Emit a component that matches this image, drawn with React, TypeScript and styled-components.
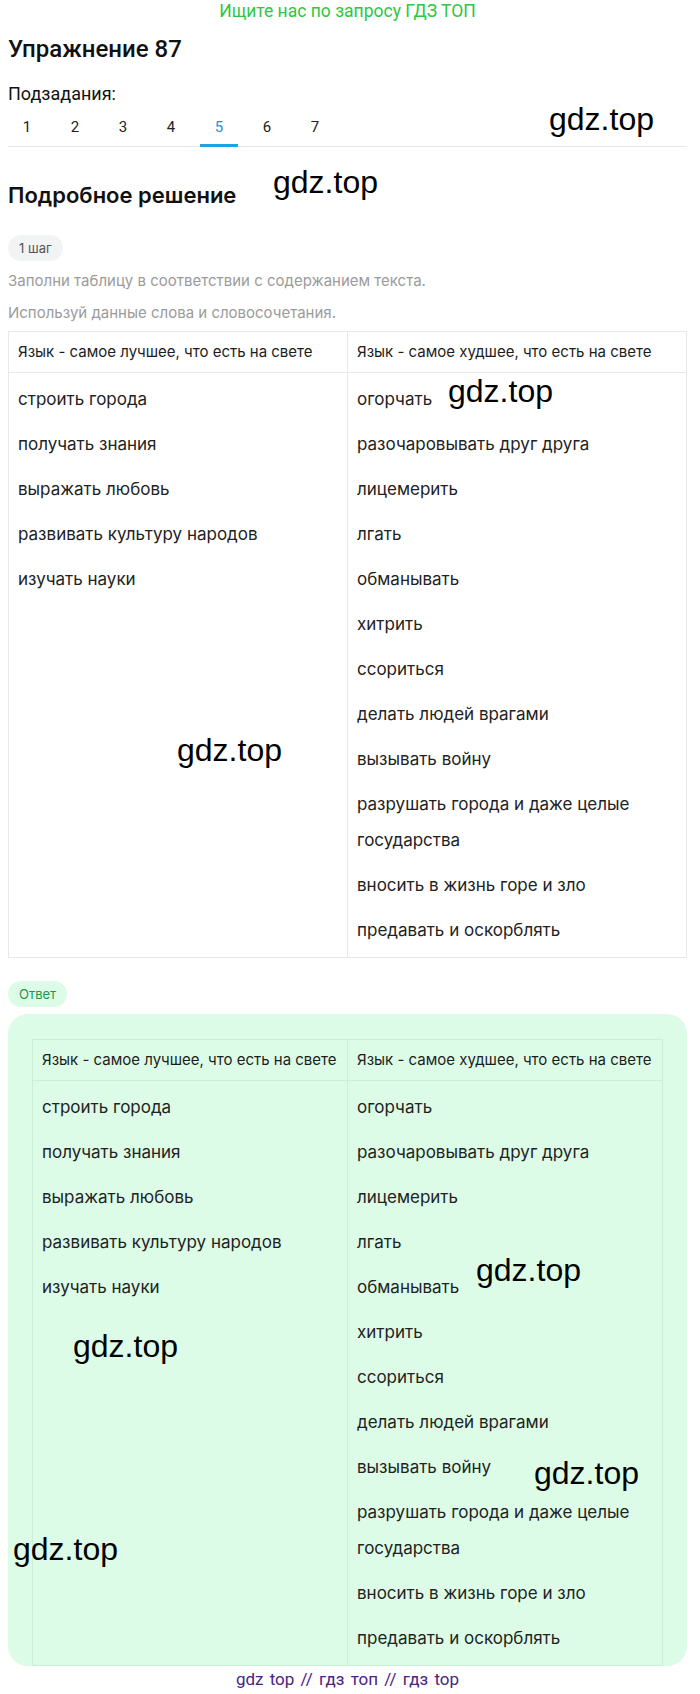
import React from "react";
import styled, { createGlobalStyle } from "styled-components";

const GlobalStyle = createGlobalStyle`
  body {
    margin: 0;
    background: #ffffff;
    font-family: Inter, "Noto Sans", sans-serif;
    color: #1c1c1c;
  }
`;

const Page = styled.div`
  position: relative;
  width: 700px;
  box-sizing: border-box;
  padding: 0 13px 4px 8px;
`;

const Banner = styled.div`
  height: 22px;
  line-height: 22px;
  text-align: center;
  font-family: Roboto, sans-serif;
  font-size: 17.5px;
  color: #2ec642;
`;

const Title = styled.h1`
  margin: 12px 0 0;
  font-family: Roboto, sans-serif;
  font-size: 24px;
  line-height: 30px;
  font-weight: 500;
  color: #111;
`;

const Label = styled.div`
  margin-top: 18px;
  font-family: Roboto, sans-serif;
  font-size: 18px;
  line-height: 24px;
  color: #111;
`;

const Tabs = styled.div`
  display: flex;
  gap: 10px;
  margin-top: 2px;
  border-bottom: 1px solid #e6e8eb;
`;

const Tab = styled.div<{ $active?: boolean }>`
  width: 38px;
  margin-bottom: -1px;
  padding: 9px 0 7px;
  text-align: center;
  font-family: Roboto, sans-serif;
  font-size: 15px;
  line-height: 20px;
  color: ${(p) => (p.$active ? "#2a8fc9" : "#222")};
  border-bottom: 3px solid ${(p) => (p.$active ? "#20a3dc" : "transparent")};
`;

const SectionTitle = styled.h2`
  margin: 34px 0 0;
  font-size: 22px;
  line-height: 28px;
  font-weight: 600;
  color: #111;
`;

const Pill = styled.div<{ $green?: boolean }>`
  display: inline-block;
  height: 26px;
  line-height: 26px;
  padding: 0 11px;
  border-radius: 13px;
  font-size: 13px;
  background: ${(p) => (p.$green ? "#dcfce7" : "#f2f3f5")};
  color: ${(p) => (p.$green ? "#23944c" : "#555")};
`;

const StepRow = styled.div`
  margin-top: 26px;
`;

const Hints = styled.div`
  margin-top: 4px;
  font-size: 15px;
  line-height: 32px;
  color: #9b9b9b;
`;

const Table = styled.table<{ $green?: boolean }>`
  width: 100%;
  margin-top: 2px;
  border-collapse: collapse;
  table-layout: fixed;

  th,
  td {
    border: 1px solid ${(p) => (p.$green ? "#cbeed6" : "#e6e8eb")};
    vertical-align: top;
    text-align: left;
  }
`;

const Th = styled.th`
  padding: 9px;
  font-size: 15px;
  line-height: 22px;
  font-weight: 400;
  color: #1c1c1c;
`;

const Td = styled.td`
  padding: 8px 9px 0;
`;

const Item = styled.p`
  margin: 0 0 9px;
  font-size: 17px;
  line-height: 36px;
  color: #222;
`;

const AnswerRow = styled.div`
  margin-top: 23px;
`;

const AnswerBox = styled.div`
  margin-top: 7px;
  padding: 25px 24px 0;
  border-radius: 20px;
  background: #dcfce7;

  table {
    margin-top: 0;
  }
`;

const Footer = styled.div`
  margin-top: 2px;
  text-align: center;
  font-family: Roboto, sans-serif;
  font-size: 17px;
  line-height: 22px;
  color: #4a2383;
  word-spacing: 2px;
`;

const Mark = styled.span<{ $x: number; $y: number }>`
  position: absolute;
  left: ${(p) => p.$x}px;
  top: ${(p) => p.$y}px;
  font-family: "Liberation Sans", Arial, sans-serif;
  font-size: 32px;
  line-height: 32px;
  color: #000;
  pointer-events: none;
`;

const good = [
  "строить города",
  "получать знания",
  "выражать любовь",
  "развивать культуру народов",
  "изучать науки",
];

const bad = [
  "огорчать",
  "разочаровывать друг друга",
  "лицемерить",
  "лгать",
  "обманывать",
  "хитрить",
  "ссориться",
  "делать людей врагами",
  "вызывать войну",
  "разрушать города и даже целые государства",
  "вносить в жизнь горе и зло",
  "предавать и оскорблять",
];

const marks = [
  { x: 549, y: 103 },
  { x: 273, y: 166 },
  { x: 448, y: 375 },
  { x: 177, y: 734 },
  { x: 476, y: 1254 },
  { x: 73, y: 1330 },
  { x: 534, y: 1457 },
  { x: 13, y: 1533 },
];

function WordsTable({ green }: { green?: boolean }) {
  return (
    <Table $green={green}>
      <thead>
        <tr>
          <Th>Язык - самое лучшее, что есть на свете</Th>
          <Th>Язык - самое худшее, что есть на свете</Th>
        </tr>
      </thead>
      <tbody>
        <tr>
          <Td>
            {good.map((w) => (
              <Item key={w}>{w}</Item>
            ))}
          </Td>
          <Td>
            {bad.map((w) => (
              <Item key={w}>{w}</Item>
            ))}
          </Td>
        </tr>
      </tbody>
    </Table>
  );
}

export default function App() {
  return (
    <>
      <GlobalStyle />
      <Page>
        <Banner>Ищите нас по запросу ГДЗ ТОП</Banner>
        <Title>Упражнение 87</Title>
        <Label>Подзадания:</Label>
        <Tabs>
          {[1, 2, 3, 4, 5, 6, 7].map((n) => (
            <Tab key={n} $active={n === 5}>
              {n}
            </Tab>
          ))}
        </Tabs>

        <SectionTitle>Подробное решение</SectionTitle>
        <StepRow>
          <Pill>1 шаг</Pill>
        </StepRow>
        <Hints>
          <div>Заполни таблицу в соответствии с содержанием текста.</div>
          <div>Используй данные слова и словосочетания.</div>
        </Hints>
        <WordsTable />

        <AnswerRow>
          <Pill $green>Ответ</Pill>
        </AnswerRow>
        <AnswerBox>
          <WordsTable green />
        </AnswerBox>

        <Footer>gdz top // гдз топ // гдз top</Footer>

        {marks.map((m, i) => (
          <Mark key={i} $x={m.x} $y={m.y}>
            gdz.top
          </Mark>
        ))}
      </Page>
    </>
  );
}
